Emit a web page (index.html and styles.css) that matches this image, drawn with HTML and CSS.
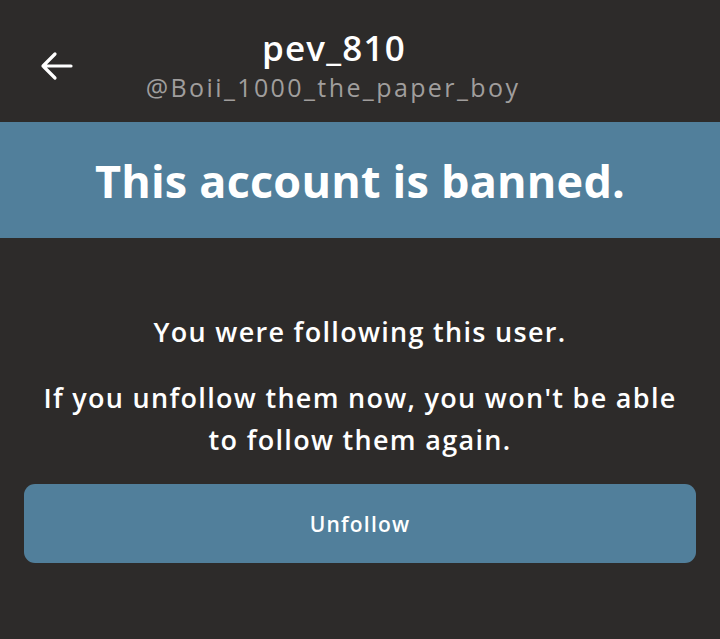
FILE: index.html
```html
<!DOCTYPE html>
<html>
<head>
<meta charset="utf-8">
<link rel="stylesheet" href="styles.css">
</head>
<body>
<div class="app">
  <header class="topbar">
    <div class="back">
      <svg width="34" height="30" viewBox="0 0 34 30"><path d="M32 15 H4 M16 3 L4 15 L16 27" fill="none" stroke="#fff" stroke-width="3.2" stroke-linecap="round" stroke-linejoin="round"/></svg>
    </div>
    <div class="names">
      <div class="name">pev_810</div>
      <div class="handle">@Boii_1000_the_paper_boy</div>
    </div>
  </header>
  <section class="banner">This account is banned.</section>
  <main class="body">
    <p class="msg first">You were following this user.</p>
    <p class="msg">If you unfollow them now, you won't be able to follow them again.</p>
    <button class="btn">Unfollow</button>
  </main>
</div>
</body>
</html>
```
FILE: styles.css
```css
html, body { margin: 0; padding: 0; }
body {
  background: #2d2b2a;
  font-family: "Open Sans", "Lato", sans-serif;
  color: #fff;
  width: 720px;
  height: 639px;
  overflow: hidden;
}
.topbar {
  height: 122px;
  display: flex;
  align-items: center;
  position: relative;
}
.back {
  position: absolute;
  left: 39px;
  top: 51px;
  width: 34px;
  height: 30px;
}
.names {
  flex: 1;
  display: flex;
  flex-direction: column;
  align-items: center;
  padding-top: 8px;
}
.name {
  font-size: 35px;
  font-weight: 600;
  line-height: 44px;
  letter-spacing: 1.2px;
  margin-left: -52px;
}
.handle {
  font-size: 25px;
  color: #a09e9d;
  line-height: 34px;
  letter-spacing: 2.4px;
  margin-left: -54px;
}
.banner {
  background: #517f9b;
  height: 116px;
  display: flex;
  align-items: center;
  justify-content: center;
  font-size: 45px;
  font-weight: 700;
  letter-spacing: 0.2px;
}
.body {
  padding: 73px 24px 0;
  display: flex;
  flex-direction: column;
  align-items: center;
}
.msg {
  margin: 0;
  font-size: 27px;
  line-height: 42px;
  text-align: center;
  font-weight: 600;
  letter-spacing: 1.3px;
  width: 650px;
}
.msg.first { margin-bottom: 24px; }
.btn {
  margin-top: 23px;
  width: 672px;
  height: 79px;
  background: #517f9b;
  border: none;
  border-radius: 11px;
  color: #fff;
  font-family: inherit;
  font-size: 21px;
  font-weight: 600;
  letter-spacing: 1.2px;
}
```
